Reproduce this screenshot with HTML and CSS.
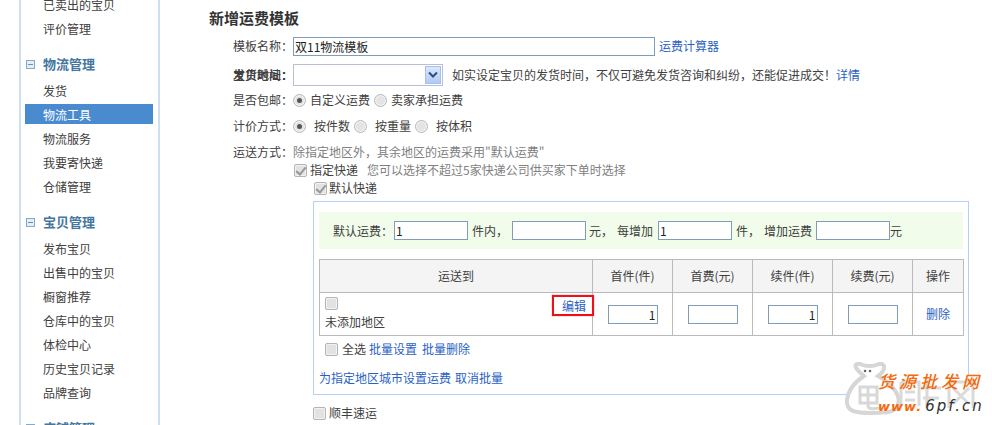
FILE: index.html
```html
<!DOCTYPE html>
<html lang="zh">
<head>
<meta charset="utf-8">
<title>新增运费模板</title>
<link rel="stylesheet" href="styles.css">
</head>
<body>
<div class="page">
  <nav class="side">
    <ul class="menu">
      <li>已卖出的宝贝</li>
      <li>评价管理</li>
    </ul>
    <h3 class="group"><i class="minus"></i>物流管理</h3>
    <ul class="menu">
      <li>发货</li>
      <li class="on">物流工具</li>
      <li>物流服务</li>
      <li>我要寄快递</li>
      <li>仓储管理</li>
    </ul>
    <h3 class="group"><i class="minus"></i>宝贝管理</h3>
    <ul class="menu">
      <li>发布宝贝</li>
      <li>出售中的宝贝</li>
      <li>橱窗推荐</li>
      <li>仓库中的宝贝</li>
      <li>体检中心</li>
      <li>历史宝贝记录</li>
      <li>品牌查询</li>
    </ul>
    <h3 class="group"><i class="minus"></i>店铺管理</h3>
  </nav>

  <main class="main">
    <h2 class="title">新增运费模板</h2>
    <div class="row r-name">
      <label class="lab">模板名称&#xFF1A;</label>
      <input class="txt name" type="text" value="双11物流模板">
      <a class="link calc">运费计算器</a>
    </div>
    <div class="row r-addr">
      <label class="lab stack"><span>宝贝地址&#xFF1A;</span><span>发货时间&#xFF1A;</span></label>
      <div class="select"><span class="arrow"><svg width="10" height="8" viewBox="0 0 10 8"><path d="M1 1.5 5 5.5 9 1.5" fill="none" stroke="#2a4f86" stroke-width="2"/></svg></span></div>
      <span class="hint">如实设定宝贝的发货时间&#xFF0C;不仅可避免发货咨询和纠纷&#xFF0C;还能促进成交&#xFF01;</span>
      <a class="link">详情</a>
    </div>
    <div class="row r-free">
      <label class="lab">是否包邮&#xFF1A;</label>
      <input class="radio" type="radio" name="free" checked><span class="opt">自定义运费</span>
      <input class="radio" type="radio" name="free"><span class="opt">卖家承担运费</span>
    </div>
    <div class="row r-price">
      <label class="lab">计价方式&#xFF1A;</label>
      <input class="radio" type="radio" name="price" checked><span class="opt wide">按件数</span>
      <input class="radio" type="radio" name="price"><span class="opt wide">按重量</span>
      <input class="radio" type="radio" name="price"><span class="opt wide">按体积</span>
    </div>
    <div class="row r-way">
      <label class="lab">运送方式&#xFF1A;</label>
      <span class="gray">除指定地区外&#xFF0C;其余地区的运费采用"默认运费"</span>
    </div>
    <div class="row r-sub">
      <input class="check" type="checkbox" checked disabled><span>指定快递</span>
      <span class="gray tip">您可以选择不超过5家快递公司供买家下单时选择</span>
    </div>
    <div class="row r-def">
      <input class="check" type="checkbox" checked disabled><span class="tight">默认快递</span>
    </div>

    <section class="box">
      <div class="fee">
        <span class="f-lab">默认运费&#xFF1A;</span><input class="txt fee-in" type="text" value="1">
        <span class="f-u">件内&#xFF0C;</span><input class="txt fee-in" type="text">
        <span class="f-y">元&#xFF0C;</span><span class="f-m">每增加</span><input class="txt fee-in" type="text" value="1">
        <span class="f-u">件&#xFF0C;</span><span class="f-a">增加运费</span><input class="txt fee-in" type="text"><span>元</span>
      </div>
      <table class="tbl">
        <colgroup><col class="c1"><col class="c2"><col class="c2"><col class="c2"><col class="c2"><col class="c3"></colgroup>
        <thead>
          <tr><th>运送到</th><th>首件(件)</th><th>首费(元)</th><th>续件(件)</th><th>续费(元)</th><th>操作</th></tr>
        </thead>
        <tbody>
          <tr>
            <td class="dest">
              <input class="check blank" type="checkbox">
              <div class="none">未添加地区</div>
              <a class="link edit">编辑</a>
            </td>
            <td><input class="txt cell" type="text" value="1"></td>
            <td><input class="txt cell" type="text"></td>
            <td><input class="txt cell" type="text" value="1"></td>
            <td><input class="txt cell" type="text"></td>
            <td><a class="link">删除</a></td>
          </tr>
        </tbody>
      </table>
      <div class="batch">
        <input class="check blank" type="checkbox"><span class="all">全选</span>
        <a class="link">批量设置</a><a class="link">批量删除</a>
      </div>
      <div class="area">
        <a class="link">为指定地区城市设置运费</a><a class="link">取消批量</a>
      </div>
    </section>
    <div class="row r-sf">
      <input class="check blank" type="checkbox"><span>顺丰速运</span>
    </div>
  </main>

  <div class="mark">
    <svg class="bag" width="137" height="56" viewBox="0 0 137 56">
      <path d="M40 14H132V50H40Z" fill="#fff"/>
      <path d="M19 14C9 6 8 1 15 2 22 5 27 5 34 2 41 1 41 8 33 14 48 22 56 34 53 43 51 50 42 51 27 51 9 51 1 49 2 38 3 29 10 20 19 14Z" fill="#fff" stroke="#d6d6d6" stroke-width="4"/>
      <path d="M15 25H32V41H15ZM15 33H32M23 25V44Q23 48 35 46" fill="none" stroke="#d8d8d8" stroke-width="3"/>
      <circle cx="20" cy="9" r="1.3" fill="#666"/><circle cx="25" cy="9" r="1.3" fill="#666"/>
      <path d="M56 20H74V44M56 20V44M60 30H70M60 38H70M82 18V46M76 26H96M78 36H94M104 20H128V46M104 20V46M108 26 124 42M124 26 108 42" fill="none" stroke="#dadada" stroke-width="3"/>
    </svg>
    <span class="mark-a">货源批发网</span>
    <span class="mark-b">www.<b>6pf.cn</b></span>
  </div>
</div>
</body>
</html>
```
FILE: styles.css
```css
* { box-sizing: border-box; }
html, body { margin: 0; height: 425px; overflow: hidden; background: #fff; }
body { font: 12px/18px "Noto Sans CJK SC", "Liberation Sans", sans-serif; color: #404040; }
ul { list-style: none; margin: 0; padding: 0; }
h2, h3 { margin: 0; }
.page { position: relative; display: flex; width: 992px; height: 425px; overflow: hidden; }

.side { flex: none; width: 141px; height: 460px; margin: -7px 0 0 19px; padding: 0 5px 0 4px; border: solid #cfdff0; border-width: 0 2px; }
.menu li { height: 24px; line-height: 24px; padding-left: 18px; color: #404040; }
.menu li.on { height: 20px; line-height: 22px; margin: 1px 0 3px; background: #4a8bd0; color: #fff; }
.group { display: flex; align-items: center; height: 24px; margin: 11px 0 3px; font-size: 13px; font-weight: 700; color: #43779f; }
.minus { position: relative; flex: none; width: 9px; height: 9px; margin: 0 8px 0 1px; border: 1px solid #86aac8; background: #e5edf5; }
.minus::after { content: ""; position: absolute; left: 1px; right: 1px; top: 3px; height: 1px; background: #6d8fae; }

.main { flex: none; width: 760px; margin-left: 49px; }
.title { height: 18px; margin-top: 9px; font-size: 15px; line-height: 18px; font-weight: 700; color: #333; }
.row { display: flex; align-items: center; height: 20px; white-space: nowrap; }
.lab { flex: none; width: 60px; margin: 0 0 0 24px; }
.r-name { margin-top: 9px; }
.r-addr { margin-top: 8px; height: 22px; }
.r-free { margin-top: 4px; }
.r-price { margin-top: 6px; }
.r-way { margin-top: 7px; height: 18px; }
.r-sub { height: 18px; padding-left: 85px; }
.r-def { height: 18px; padding-left: 105px; }
.r-sf { margin-top: 8px; padding-left: 104px; }

.stack { display: grid; font-weight: 500; }
.stack span { grid-area: 1 / 1; }

.txt { height: 19px; padding: 0 1px; border: 1px solid #7f9db9; background: #fff; font: 12px "Noto Sans CJK SC", "Liberation Sans", sans-serif; color: #222; outline: 0; }
.name { width: 362px; }
.link { color: #2a5fc4; cursor: pointer; }
.calc { margin-left: 4px; }

.select { position: relative; flex: none; width: 150px; height: 22px; border: 1px solid #b8bfd6; background: #fff; }
.arrow { position: absolute; right: 1px; top: 1px; bottom: 1px; width: 16px; display: flex; align-items: center; justify-content: center; background: linear-gradient(#dbe7fb, #b2cbf4); border: 1px solid #a9c0e6; }
.hint { margin-left: 9px; }

.radio { appearance: none; flex: none; position: relative; width: 13px; height: 13px; margin: 0 4px 0 0; border-radius: 50%; border: 1px solid #b9b9b9; background: #e4e4e4; box-shadow: inset 0 0 0 1px #f4f4f4; }
.radio:checked::after { content: ""; position: absolute; left: 3px; top: 3px; width: 5px; height: 5px; border-radius: 50%; background: #555; }
.opt { margin-right: 4px; }
.wide { margin-left: 4px; }
.gray { color: #808080; }
.tip { margin-left: 9px; }
.tight { margin-left: -1px; }

.check { appearance: none; flex: none; position: relative; width: 13px; height: 13px; margin: 0 3px 0 0; border: 1px solid #b4b4b4; border-radius: 2px; background: #e2e2e2; box-shadow: inset 0 0 0 1px #f2f2f2; }
.check:checked::after { content: ""; position: absolute; left: 3px; top: 0; width: 4px; height: 8px; border: solid #999; border-width: 0 2px 2px 0; transform: rotate(40deg); }

.box { width: 656px; height: 194px; margin: 4px 0 0 104px; padding: 10px 5px 0; border: 1px solid #b3d0fb; }
.fee { display: flex; align-items: center; height: 37px; padding-left: 14px; background: #f1fdea; white-space: nowrap; }
.fee-in { width: 74px; flex: none; }
.f-lab { margin-right: 1px; }
.f-u { margin: 0 4px; }
.f-y { margin: 0 4px 0 3px; }
.f-m { margin-right: 5px; }
.f-a { margin-right: 4px; }

.tbl { table-layout: fixed; width: 644px; height: 77px; margin-top: 10px; border-collapse: collapse; }
.c1 { width: 273px; }
.c2 { width: 80px; }
.c3 { width: 51px; }
.tbl th, .tbl td { border: 1px solid #bbb; padding: 0; text-align: center; font-weight: 400; }
.tbl th { height: 33px; background: #f4f4f4; }
.tbl td { height: 43px; }
.cell { width: 50px; text-align: right; vertical-align: middle; }
.tbl .dest { position: relative; text-align: left; padding-left: 5px; }
.dest .check { display: block; margin: 0; }
.none { height: 18px; line-height: 18px; margin-top: 3px; }
.edit { position: absolute; right: -2px; top: 2px; width: 42px; height: 21px; line-height: 18px; padding-left: 8px; border: 2px solid #ee0f1a; box-shadow: 0 0 1px #f66; }

.batch { display: flex; align-items: center; height: 18px; margin-top: 4px; padding-left: 6px; }
.batch .check { margin-right: 4px; }
.all { margin-right: 3px; }
.batch .link + .link { margin-left: 5px; }
.area { height: 18px; margin-top: 11px; }
.area .link + .link { margin-left: 4px; }

.mark { position: absolute; left: 845px; top: 362px; width: 140px; height: 60px; }
.bag { position: absolute; left: 0; top: 0; }
.mark-a { position: absolute; left: 33px; top: 8px; font: italic 500 17px/22px "Noto Sans CJK SC", sans-serif; letter-spacing: 4px; white-space: nowrap; color: #f56a0c; }
.mark-b { position: absolute; left: 33px; top: 35px; font: italic 700 13px/18px "DejaVu Sans", sans-serif; letter-spacing: 1px; color: #f56a0c; white-space: nowrap; }
.mark-b b { color: #333; font: italic 400 15px/18px "DejaVu Sans", sans-serif; letter-spacing: 2px; margin-left: 3px; }
```
